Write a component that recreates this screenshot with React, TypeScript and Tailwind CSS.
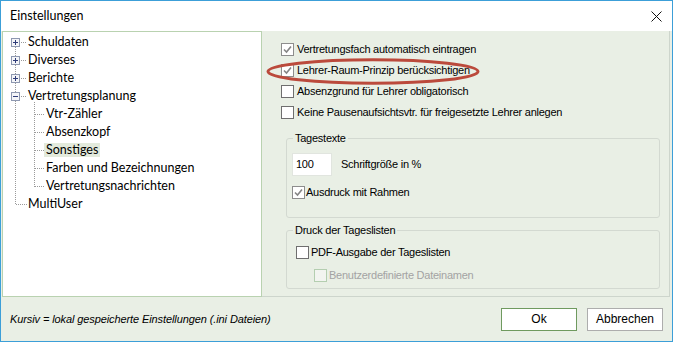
import React from "react";

type Node = { label: string; level: 0 | 1; box?: "plus" | "minus"; selected?: boolean };

const tree: Node[] = [
  { label: "Schuldaten", level: 0, box: "plus" },
  { label: "Diverses", level: 0, box: "plus" },
  { label: "Berichte", level: 0, box: "plus" },
  { label: "Vertretungsplanung", level: 0, box: "minus" },
  { label: "Vtr-Zähler", level: 1 },
  { label: "Absenzkopf", level: 1 },
  { label: "Sonstiges", level: 1, selected: true },
  { label: "Farben und Bezeichnungen", level: 1 },
  { label: "Vertretungsnachrichten", level: 1 },
  { label: "MultiUser", level: 0 },
];

function ExpandBox({ kind }: { kind: "plus" | "minus" }) {
  return (
    <svg width="9" height="9" viewBox="0 0 9 9" className="block" shapeRendering="crispEdges">
      <rect x="0.5" y="0.5" width="8" height="8" fill="#f4f5f8" stroke="#8e98b0" />
      <line x1="2" y1="4.5" x2="7" y2="4.5" stroke="#2f3c78" />
      {kind === "plus" && <line x1="4.5" y1="2" x2="4.5" y2="7" stroke="#2f3c78" />}
    </svg>
  );
}

function TreeLines() {
  // coordinates relative to the tree panel content box (window x-3, y-32)
  const rowY = (i: number) => 1 + i * 18 + 9;
  const dot = { stroke: "#9a9a9a", strokeDasharray: "1 1" };
  return (
    <svg
      className="absolute left-0 top-0 pointer-events-none"
      width="258"
      height="264"
      shapeRendering="crispEdges"
    >
      <line x1="12.5" y1={rowY(0) + 5} x2="12.5" y2={rowY(9) + 0.5} {...dot} />
      {[0, 1, 2, 3].map((i) => (
        <line key={i} x1="18" y1={rowY(i) + 0.5} x2="24" y2={rowY(i) + 0.5} {...dot} />
      ))}
      <line x1="13" y1={rowY(9) + 0.5} x2="24" y2={rowY(9) + 0.5} {...dot} />
      <line x1="31.5" y1={rowY(3) + 6} x2="31.5" y2={rowY(8) + 0.5} {...dot} />
      {[4, 5, 6, 7, 8].map((i) => (
        <line key={i} x1="32" y1={rowY(i) + 0.5} x2="41" y2={rowY(i) + 0.5} {...dot} />
      ))}
    </svg>
  );
}

function Check({ checked, disabled }: { checked?: boolean; disabled?: boolean }) {
  return (
    <span
      className={`w-[13px] h-[13px] shrink-0 border flex items-center justify-center ${
        disabled ? "border-[#b4ceb0] bg-[#f2f4f0]" : checked ? "border-[#8d8d8d] bg-white" : "border-[#6f6f6f] bg-white"
      }`}
    >
      {checked && (
        <svg width="9" height="9" viewBox="0 0 9 9">
          <path d="M1 4.5 L3.5 7 L8 1.5" fill="none" stroke="#858585" strokeWidth="1.6" />
        </svg>
      )}
    </span>
  );
}

function Option({ label, checked }: { label: string; checked?: boolean }) {
  return (
    <div className="flex items-center gap-[3px] h-[21px]">
      <Check checked={checked} />
      <span className="text-black">{label}</span>
    </div>
  );
}

function Group({ title, className, children }: { title: string; className: string; children: React.ReactNode }) {
  return (
    <div className={`relative border border-[#d3d9d1] rounded-[3px] ${className}`}>
      <span className="absolute left-[6px] -top-[8px] px-[2px] bg-[#e9efe5] leading-[14px]">{title}</span>
      {children}
    </div>
  );
}

export default function App() {
  return (
    <div className="w-[673px] h-[342px] bg-white border border-[#3c9fd8] flex flex-col overflow-hidden">
      <div className="h-[30px] shrink-0 flex items-center justify-between pl-[9px] pr-[10px] font-['Lato',sans-serif] text-[12.5px] text-black">
        <span>Einstellungen</span>
        <svg width="11" height="11" viewBox="0 0 11 11">
          <path d="M0.5 0.5 L10.5 10.5 M10.5 0.5 L0.5 10.5" stroke="#111" strokeWidth="1" />
        </svg>
      </div>

      <div className="flex-1 bg-[#e9efe5] flex flex-col">
        <div className="flex h-[266px] pl-[1px] pr-[2px]">
          <div className="relative w-[260px] bg-white border border-[#b9d2b0] pt-[1px] font-['Lato',sans-serif] text-[12.5px] text-black">
            <TreeLines />
            {tree.map((n) => (
              <div key={n.label} className="relative h-[18px] flex items-center">
                {n.level === 0 ? (
                  <>
                    <span className="w-[8px] shrink-0" />
                    <span className="w-[9px] h-[9px] shrink-0">{n.box && <ExpandBox kind={n.box} />}</span>
                    <span className="w-[6px] shrink-0" />
                  </>
                ) : (
                  <span className="w-[41px] shrink-0" />
                )}
                <span className={`px-[2px] leading-[14px] ${n.selected ? "bg-[#e3eadc]" : ""}`}>{n.label}</span>
              </div>
            ))}
          </div>

          <div className="relative flex-1 border-r border-b border-[#cdd5cc] pl-[19px] pt-[8px] font-['Liberation_Sans',Arial,sans-serif] text-[11px] tracking-[-0.25px]">
            <Option label="Vertretungsfach automatisch eintragen" checked />
            <Option label="Lehrer-Raum-Prinzip berücksichtigen" checked />
            <Option label="Absenzgrund für Lehrer obligatorisch" />
            <Option label="Keine Pausenaufsichtsvtr. für freigesetzte Lehrer anlegen" />

            <svg className="absolute left-[4px] top-[27px] pointer-events-none" width="214" height="27" viewBox="0 0 214 27">
              <ellipse cx="107" cy="13.5" rx="105" ry="11.8" fill="none" stroke="#bb4a3c" strokeWidth="3" />
            </svg>

            <Group title="Tagestexte" className="ml-[5px] mr-[9px] mt-[15px] h-[80px] pl-[5px] pt-[14px]">
              <div className="flex items-center gap-[9px]">
                <span className="w-[40px] h-[23px] bg-white border border-[#e1e5df] pl-[3px] flex items-center">100</span>
                <span>Schriftgröße in %</span>
              </div>
              <div className="mt-[10px] flex items-center gap-[1px] h-[13px]">
                <Check checked />
                <span>Ausdruck mit Rahmen</span>
              </div>
            </Group>

            <Group title="Druck der Tageslisten" className="ml-[5px] mr-[9px] mt-[12px] h-[59px] pl-[9px] pt-[13px]">
              <div className="flex items-center gap-[2px] h-[16px]">
                <Check />
                <span>PDF-Ausgabe der Tageslisten</span>
              </div>
              <div className="mt-[7px] ml-[18px] flex items-center gap-[2px] h-[16px]">
                <Check disabled />
                <span className="text-[#a3a3a3]">Benutzerdefinierte Dateinamen</span>
              </div>
            </Group>
          </div>
        </div>

        <div className="flex-1 flex items-center justify-between pl-[9px] pr-[9px]">
          <span className="italic text-[11px] tracking-[-0.1px] font-['Liberation_Sans',Arial,sans-serif] text-black">
            Kursiv = lokal gespeicherte Einstellungen (.ini Dateien)
          </span>
          <div className="flex gap-[10px] font-['Liberation_Sans',Arial,sans-serif] text-[12px]">
            <button className="w-[76px] h-[23px] bg-white border border-[#6f9a5f] text-black">Ok</button>
            <button className="w-[76px] h-[23px] bg-white border border-[#adadad] text-black">Abbrechen</button>
          </div>
        </div>
      </div>
    </div>
  );
}
